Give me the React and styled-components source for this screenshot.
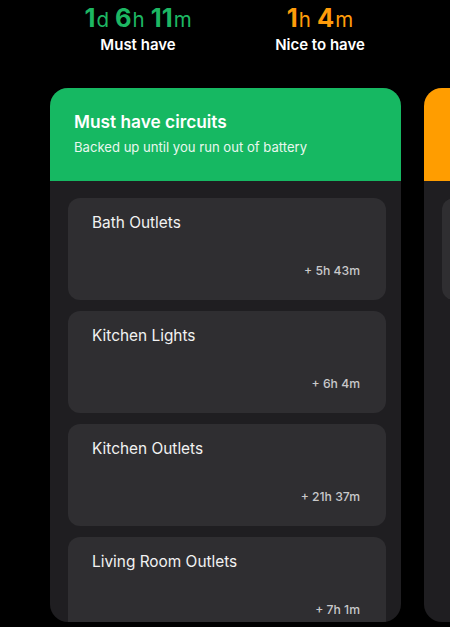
import React from "react";
import styled, { createGlobalStyle } from "styled-components";

const Global = createGlobalStyle`
  html, body { margin: 0; padding: 0; background: #000; }
  body { font-family: Inter, "Noto Sans", sans-serif; overflow: hidden; }
  * { box-sizing: border-box; }
`;

const Page = styled.div`
  width: 450px;
  height: 627px;
  background: #000;
  overflow: hidden;
`;

const Stats = styled.div`
  display: grid;
  grid-template-columns: 182px 182px;
  padding-left: 47px;
  padding-top: 3px;
`;

const Stat = styled.div`
  display: flex;
  flex-direction: column;
  align-items: center;
`;

const Value = styled.div`
  font-size: 25.5px;
  line-height: 30px;
  font-weight: 700;
  color: ${(p) => p.$color};
  white-space: nowrap;
`;

const Unit = styled.span`
  font-size: 20.5px;
  font-weight: 400;
  margin-left: 1px;
  margin-right: 6px;
  &:last-child { margin-right: 0; }
`;

const Label = styled.div`
  font-size: 15px;
  line-height: 20px;
  font-weight: 600;
  color: #fff;
`;

const Track = styled.div`
  display: flex;
  gap: 23px;
  padding-left: 50px;
  margin-top: 33px;
`;

const Panel = styled.section`
  flex: 0 0 351px;
  height: 534px;
  border-radius: 18px;
  overflow: hidden;
  background: #1f1e21;
  display: flex;
  flex-direction: column;
`;

const Header = styled.header`
  flex: 0 0 93px;
  background: ${(p) => p.$color};
  padding: 23px 24px 0;
`;

const Title = styled.h2`
  margin: 0;
  font-size: 17.3px;
  line-height: 22px;
  font-weight: 600;
  color: #fff;
`;

const Subtitle = styled.p`
  margin: 5px 0 0;
  font-size: 13.1px;
  line-height: 18px;
  font-weight: 400;
  color: #e9f7ef;
`;

const List = styled.div`
  display: flex;
  flex-direction: column;
  gap: 11px;
  padding: 17px 15px 0 18px;
`;

const Card = styled.div`
  height: 102px;
  flex: 0 0 102px;
  background: #2f2e31;
  border-radius: 12px;
  padding: 15px 26px 21px 24px;
  display: flex;
  flex-direction: column;
  justify-content: space-between;
`;

const CardName = styled.div`
  font-size: 15.4px;
  line-height: 20px;
  font-weight: 400;
  color: #f2f2f2;
`;

const CardTime = styled.div`
  align-self: flex-end;
  font-size: 12.2px;
  line-height: 16px;
  font-weight: 500;
  color: #c9c9cb;
`;

const circuits = [
  { name: "Bath Outlets", time: "+ 5h 43m" },
  { name: "Kitchen Lights", time: "+ 6h 4m" },
  { name: "Kitchen Outlets", time: "+ 21h 37m" },
  { name: "Living Room Outlets", time: "+ 7h 1m" },
];

function Duration({ parts, color }) {
  return (
    <Value $color={color}>
      {parts.map(([n, u]) => (
        <React.Fragment key={u}>
          {n}
          <Unit>{u}</Unit>
        </React.Fragment>
      ))}
    </Value>
  );
}

export default function App() {
  return (
    <Page>
      <Global />
      <Stats>
        <Stat>
          <Duration color="#1db763" parts={[["1", "d"], ["6", "h"], ["11", "m"]]} />
          <Label>Must have</Label>
        </Stat>
        <Stat>
          <Duration color="#ff9c0a" parts={[["1", "h"], ["4", "m"]]} />
          <Label>Nice to have</Label>
        </Stat>
      </Stats>
      <Track>
        <Panel>
          <Header $color="#16b862">
            <Title>Must have circuits</Title>
            <Subtitle>Backed up until you run out of battery</Subtitle>
          </Header>
          <List>
            {circuits.map((c) => (
              <Card key={c.name}>
                <CardName>{c.name}</CardName>
                <CardTime>{c.time}</CardTime>
              </Card>
            ))}
          </List>
        </Panel>
        <Panel>
          <Header $color="#ff9d00" />
          <List>
            <Card />
          </List>
        </Panel>
      </Track>
    </Page>
  );
}
